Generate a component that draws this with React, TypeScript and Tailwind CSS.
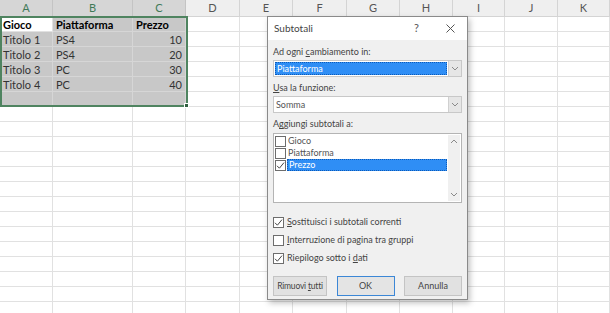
import React from "react";

const cols = [
  { l: "A", w: "w-[53px]", sel: true },
  { l: "B", w: "w-[80px]", sel: true },
  { l: "C", w: "w-[53px]", sel: true },
  { l: "D", w: "w-[54px]", sel: false },
  { l: "E", w: "w-[53px]", sel: false },
  { l: "F", w: "w-[54px]", sel: false },
  { l: "G", w: "w-[53px]", sel: false },
  { l: "H", w: "w-[53px]", sel: false },
  { l: "I", w: "w-[52px]", sel: false },
  { l: "J", w: "w-[53px]", sel: false },
  { l: "K", w: "w-[52px]", sel: false },
];

const data: string[][] = [
  ["Gioco", "Piattaforma", "Prezzo"],
  ["Titolo 1", "PS4", "10"],
  ["Titolo 2", "PS4", "20"],
  ["Titolo 3", "PC", "30"],
  ["Titolo 4", "PC", "40"],
  ["", "", ""],
];

function Chevron({ up = false }: { up?: boolean }) {
  return (
    <svg width="8" height="5" viewBox="0 0 8 5" className={up ? "rotate-180" : ""}>
      <path d="M1 1 L4 4 L7 1" fill="none" stroke="#8a8a8a" strokeWidth="1" />
    </svg>
  );
}

function Check({ checked }: { checked: boolean }) {
  return (
    <div className="w-[11px] h-[11px] border border-[#6d6d6d] bg-white flex items-center justify-center shrink-0">
      {checked && (
        <svg width="9" height="9" viewBox="0 0 9 9">
          <path d="M1 4.8 L3.4 7.2 L8 1.6" fill="none" stroke="#444" strokeWidth="1" />
        </svg>
      )}
    </div>
  );
}

export default function App() {
  return (
    <div className="relative w-[610px] h-[313px] overflow-hidden bg-white" style={{ fontFamily: "Lato, 'Open Sans', sans-serif" }}>
      {/* header row */}
      <div className="flex h-[17px]">
        {cols.map((c) => (
          <div
            key={c.l}
            className={`${c.w} h-full flex items-center justify-center text-[11px] border-r border-b ${
              c.sel
                ? "bg-[#d6d6d6] text-[#3f7a57] border-r-[#c4c4c4] border-b-[#3f7a57]"
                : "bg-[#efefef] text-[#555] border-r-[#d4d4d4] border-b-[#d4d4d4]"
            }`}
          >
            {c.l}
          </div>
        ))}
      </div>
      {/* rows */}
      {Array.from({ length: 20 }).map((_, r) => (
        <div key={r} className="flex h-[15px]">
          {cols.map((c, ci) => {
            const inSel = ci < 3 && r < 6;
            const active = ci === 0 && r === 0;
            const txt = inSel ? data[r][ci] : "";
            const bold = r === 0;
            return (
              <div
                key={c.l}
                className={`${c.w} h-full flex items-center px-[3px] text-[11px] leading-none border-r border-b ${
                  inSel && !active
                    ? "bg-[#c8c8c8] border-[#d6d6d6] text-[#333]"
                    : "bg-white border-[#e1e1e1] text-black"
                } ${ci === 2 && r > 0 ? "justify-end" : ""} ${bold ? "font-bold text-black" : ""}`}
              >
                {txt}
              </div>
            );
          })}
        </div>
      ))}

      {/* selection border */}
      <div className="absolute left-0 top-[16px] w-[188px] h-[91px] border-2 border-[#4f8460] pointer-events-none" />
      <div className="absolute left-[184px] top-[103px] w-[5px] h-[5px] bg-[#2f5f40] border border-white" />

      {/* dialog */}
      <div
        className="absolute left-[267px] top-[16px] w-[201px] h-[284px] border border-[#8a8a8a] bg-[#f0f0f0] shadow-[2px_3px_6px_rgba(0,0,0,0.25)] flex flex-col text-[9px] text-[#333]"
        style={{ fontFamily: "Lato, 'Noto Sans', sans-serif" }}
      >
        <div className="h-[23px] bg-white flex items-center pl-[6px] pr-[12px] text-[10px] text-[#444]">
          <span className="flex-1">Subtotali</span>
          <span className="mr-[27px] text-[11px] text-[#555]">?</span>
          <svg width="9" height="9" viewBox="0 0 9 9">
            <path d="M0.5 0.5 L8.5 8.5 M8.5 0.5 L0.5 8.5" stroke="#555" strokeWidth="1" />
          </svg>
        </div>

        <div className="flex flex-col px-[5px]">
          <div className="h-[12px] mt-[6px] flex items-center text-[#444]">
            <span>
              Ad ogni <u className="underline-offset-1">c</u>ambiamento in:
            </span>
          </div>
          <div className="h-[17px] mt-[2px] flex border border-[#c8c8c8] bg-white">
            <div className="flex-1 m-[1px] bg-[#2f8ef5] border border-dotted border-[#0d5bb8] text-white flex items-center pl-[1px]">
              Piattaforma
            </div>
            <div className="w-[13px] bg-[#e6e6e6] border-l border-[#d0d0d0] flex items-center justify-center">
              <Chevron />
            </div>
          </div>

          <div className="h-[12px] mt-[5px] flex items-center text-[#444]">
            <span>
              <u className="underline-offset-1">U</u>sa la funzione:
            </span>
          </div>
          <div className="h-[17px] mt-[2px] flex border border-[#c8c8c8] bg-white">
            <div className="flex-1 text-[#555] flex items-center pl-[2px]">Somma</div>
            <div className="w-[13px] bg-[#e6e6e6] border-l border-[#d0d0d0] flex items-center justify-center">
              <Chevron />
            </div>
          </div>

          <div className="h-[12px] mt-[5px] flex items-center text-[#444]">
            <span>
              A<u className="underline-offset-1">g</u>giungi subtotali a:
            </span>
          </div>
          <div className="h-[70px] mt-[3px] flex border border-[#b4b4b4] bg-white">
            <div className="flex-1 flex flex-col pt-[1px] pl-[1px]">
              <div className="h-[12px] flex items-center gap-[1px]">
                <Check checked={false} />
                <span className="pl-[1px] text-[#555]">Gioco</span>
              </div>
              <div className="h-[12px] flex items-center gap-[1px]">
                <Check checked={false} />
                <span className="pl-[1px] text-[#555]">Piattaforma</span>
              </div>
              <div className="h-[12px] flex items-center gap-[1px]">
                <Check checked={true} />
                <span className="flex-1 h-[12px] bg-[#2f8ef5] border border-dotted border-[#0d5bb8] text-white flex items-center pl-[1px] mr-[1px]">
                  Prezzo
                </span>
              </div>
            </div>
            <div className="w-[12px] bg-[#f0f0f0] flex flex-col items-center justify-between py-[4px] my-[1px] mr-[1px]">
              <Chevron up />
              <Chevron />
            </div>
          </div>

          <div className="h-[12px] mt-[13px] flex items-center gap-[3px] text-[#444]">
            <Check checked={true} />
            <span>
              <u className="underline-offset-1">S</u>ostituisci i subtotali correnti
            </span>
          </div>
          <div className="h-[12px] mt-[6px] flex items-center gap-[3px] text-[#444]">
            <Check checked={false} />
            <span>
              <u className="underline-offset-1">I</u>nterruzione di pagina tra gruppi
            </span>
          </div>
          <div className="h-[12px] mt-[6px] flex items-center gap-[3px] text-[#444]">
            <Check checked={true} />
            <span>
              Riepilogo sotto i <u className="underline-offset-1">d</u>ati
            </span>
          </div>

          <div className="flex mt-[12px] h-[20px] justify-between text-[#444]">
            <div className="w-[54px] bg-[#e1e1e1] border border-[#c4c4c4] flex items-center justify-center tracking-[-0.2px] text-[8.5px]">
              <span>
                Rimuovi <u className="underline-offset-1">t</u>utti
              </span>
            </div>
            <div className="w-[58px] bg-[#e4e4e4] border border-[#3c87d6] flex items-center justify-center">
              OK
            </div>
            <div className="w-[58px] bg-[#e1e1e1] border border-[#c4c4c4] flex items-center justify-center">
              Annulla
            </div>
          </div>
        </div>
      </div>
    </div>
  );
}
